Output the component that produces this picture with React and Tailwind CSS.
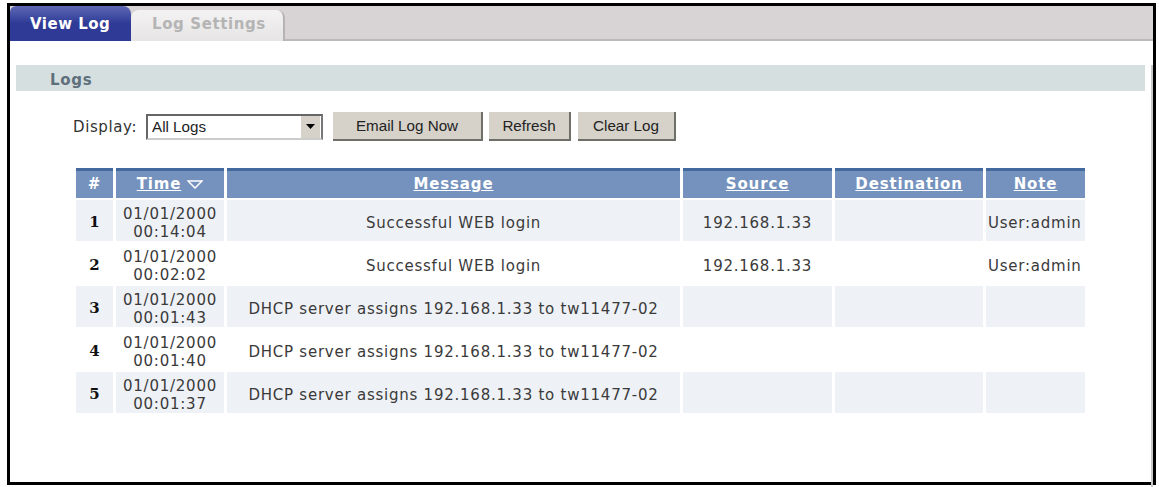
const logs = [
  { id: 1, date: "01/01/2000", time: "00:14:04", msg: "Successful WEB login", src: "192.168.1.33", note: "User:admin" },
  { id: 2, date: "01/01/2000", time: "00:02:02", msg: "Successful WEB login", src: "192.168.1.33", note: "User:admin" },
  { id: 3, date: "01/01/2000", time: "00:01:43", msg: "DHCP server assigns 192.168.1.33 to tw11477-02", src: "", note: "" },
  { id: 4, date: "01/01/2000", time: "00:01:40", msg: "DHCP server assigns 192.168.1.33 to tw11477-02", src: "", note: "" },
  { id: 5, date: "01/01/2000", time: "00:01:37", msg: "DHCP server assigns 192.168.1.33 to tw11477-02", src: "", note: "" },
];

const thClass =
  "h-[30px] p-0 border-t-[3px] border-t-[#44699f] bg-[#7492bd] text-center font-bold text-[15px] tracking-[0.85px] text-white";

const Btn = ({ className, children }) => (
  <button
    className={`h-[29px] pt-[1px] bg-[#d6d2ca] border-r-2 border-b-2 border-[#6f6f6a] text-[15.2px] text-[#222] font-['Liberation_Sans',sans-serif] ${className}`}
  >
    {children}
  </button>
);

export default function App() {
  return (
    <div className="w-[1159px] h-[487px] bg-white pt-[3px] pl-[7px] font-['DejaVu_Sans',sans-serif] overflow-hidden">
      <div className="w-[1149px] h-[482px] border-[3px] border-black bg-white">
        {/* tabs */}
        <div className="flex h-[35px] bg-[#d8d4d6] border-b-2 border-[#bdb9bb]">
          <div className="w-[121px] h-[35px] pl-[20px] pt-[10px] rounded-tr-lg rounded-tl-md bg-linear-to-b from-[#5f68b4] via-[#2e3a96] to-[#2e3a96] text-[15px] leading-[17px] tracking-[0.5px] font-bold text-white">
            View Log
          </div>
          <div className="w-[154px] h-[31px] mt-[4px] pl-[21px] pt-[6px] rounded-t-lg bg-linear-to-b from-[#f4f3f3] to-[#e6e4e4] border-r-2 border-[#b5b3b3] text-[15px] leading-[17px] tracking-[0.6px] font-bold text-[#b4b4b4]">
            Log Settings
          </div>
        </div>

        <div className="pl-[6px] pr-[6px] border-r-2 border-[#c9c9c9] h-[441px]">
          <div className="mt-[24px] h-[26px] bg-[#d5dfe0] pl-[34px] pt-[2px] text-[15px] leading-[26px] tracking-[0.7px] font-bold text-[#5f6f7c]">
            Logs
          </div>

          {/* display filter */}
          <div className="flex items-center mt-[21px] ml-[57px] h-[29px]">
            <span className="w-[73px] pt-[1px] text-[15px] tracking-[0.6px] text-[#333]">Display:</span>
            <div className="flex items-center w-[177px] h-[26px] border-2 border-t-[#666] border-l-[#666] border-r-[#777] border-b-[#ccc] bg-white">
              <span className="flex-1 pl-[4px] pt-[1px] text-[15.2px] text-[#222] font-['Liberation_Sans',sans-serif]">All Logs</span>
              <span className="flex items-center justify-center w-[19px] h-[22px] bg-[#d6d2ca] mr-[1px]">
                <svg width="9" height="5" viewBox="0 0 9 5"><path d="M0 0h9L4.5 5z" fill="#000" /></svg>
              </span>
            </div>
            <Btn className="w-[150px] ml-[10px]">Email Log Now</Btn>
            <Btn className="w-[82px] ml-[6px]">Refresh</Btn>
            <Btn className="w-[98px] ml-[7px]">Clear Log</Btn>
          </div>

          {/* log table */}
          <table className="mt-[25px] ml-[57px] w-[1012px] table-fixed border-separate border-spacing-x-[3px] border-spacing-y-[2.5px] text-[15px] tracking-[0.76px] text-[#3a3a3a]">
            <colgroup>
              <col className="w-[37px]" />
              <col className="w-[108px]" />
              <col className="w-[453px]" />
              <col className="w-[149px]" />
              <col className="w-[148px]" />
              <col className="w-[99px]" />
            </colgroup>
            <thead>
              <tr>
                <th className={thClass + " text-[#c9d5e6]"}>#</th>
                <th className={thClass}>
                  <span className="underline">Time</span>
                  <svg className="inline-block ml-[6px] align-[0px]" width="16" height="9" viewBox="0 0 16 9">
                    <path d="M1 1h14L8 8z" fill="#7492bd" stroke="#fff" strokeWidth="1.5" />
                  </svg>
                </th>
                <th className={thClass}><span className="underline">Message</span></th>
                <th className={thClass}><span className="underline">Source</span></th>
                <th className={thClass}><span className="underline">Destination</span></th>
                <th className={thClass}><span className="underline">Note</span></th>
              </tr>
            </thead>
            <tbody>
              {logs.map((row) => {
                const bg = row.id % 2 === 1 ? "bg-[#eef1f5]" : "bg-white";
                return (
                  <tr key={row.id} className="h-[41px]">
                    <td className={`${bg} p-0 pt-[4px] text-center font-bold text-[#111] font-['DejaVu_Serif',serif] tracking-normal`}>{row.id}</td>
                    <td className={`${bg} p-0 pt-[4px] text-center leading-[18px] whitespace-nowrap`}>
                      {row.date}
                      <br />
                      {row.time}
                    </td>
                    <td className={`${bg} p-0 pt-[5px] text-center whitespace-nowrap`}>{row.msg}</td>
                    <td className={`${bg} p-0 pt-[5px] text-center`}>{row.src}</td>
                    <td className={bg}></td>
                    <td className={`${bg} p-0 pt-[5px] pl-[2px] whitespace-nowrap`}>{row.note}</td>
                  </tr>
                );
              })}
            </tbody>
          </table>
        </div>
      </div>
    </div>
  );
}
